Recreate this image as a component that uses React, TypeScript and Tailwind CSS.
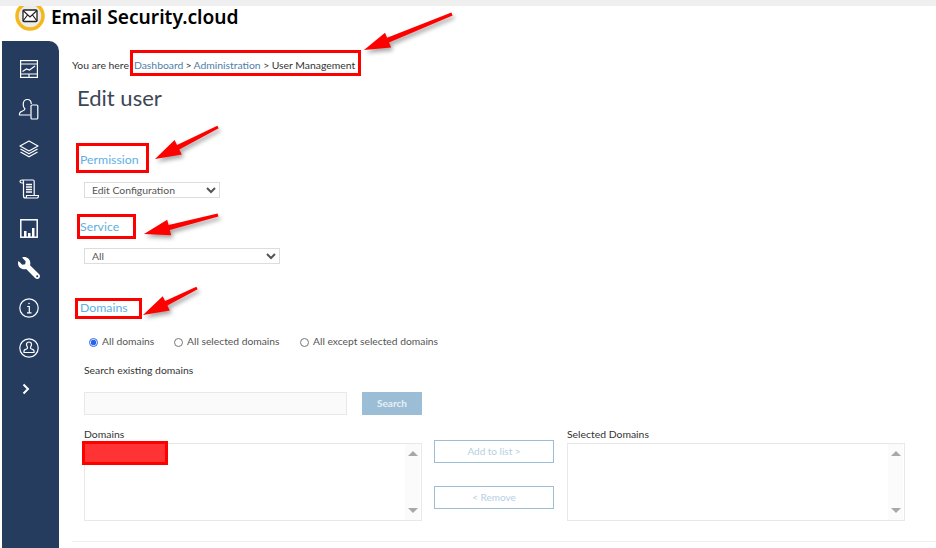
import { FaWrench } from "react-icons/fa";

const font = { fontFamily: 'Lato, "Liberation Sans", sans-serif' };
const titleFont = { fontFamily: '"Noto Sans", "Liberation Sans", sans-serif' };

const ChartIcon = () => (
  <svg width="18" height="18" viewBox="0 0 18 18" fill="none" stroke="white" strokeWidth="1.2">
    <rect x="0.6" y="0.6" width="16.8" height="16.8" />
    <path d="M0.6 4h16.8M0.6 14h16.8M9 14v3.4M2.5 11.5l4-2.5 3 1 5.5-4" />
  </svg>
);

const UsersIcon = () => (
  <svg width="22" height="22" viewBox="0 0 22 22" fill="none" stroke="white" strokeWidth="1.2">
    <path d="M12.500 17H1.500c-.5-2.200.8-3.200 3-4 1.800-.7 2.400-1.200 2.400-2.300C5.700 9.700 5.200 8.200 5.200 6.500 5.200 3.500 7 1.500 9.500 1.500c2.300 0 3.700 1.800 3.800 4.500" />
    <rect x="13" y="7" width="6.800" height="14" rx="1" />
  </svg>
);

const LayersIcon = () => (
  <svg width="20" height="18" viewBox="0 0 20 18" fill="none" stroke="white" strokeWidth="1.2" strokeLinejoin="round">
    <path d="M10 1l9 5-9 5-9-5z" />
    <path d="M1.500 9l8.500 4.800L18.500 9" />
    <path d="M1.500 12l8.500 4.800L18.500 12" />
  </svg>
);

const ScrollIcon = () => (
  <svg width="20" height="20" viewBox="0 0 20 20" fill="none" stroke="white" strokeWidth="1.2">
    <path d="M1 2.500C1 1.500 2 1 3 1h11c.8 0 1.200.6 1.200 1.500V16M1 2.500c0 1 .8 1.500 2 1.500h1.500M3 1c1 0 1.500.7 1.500 1.800v14.200c0 1 .8 2 2 2h11.500c1 0 1.500-1 1.500-2.500h-12c0 1-.3 2.500-1 2.500" />
    <path d="M7 5.500h6M7 8h6M7 10.500h6M7 13h6" strokeWidth="1.400" />
  </svg>
);

const BarsIcon = () => (
  <svg width="18" height="19" viewBox="0 0 18 19" fill="none">
    <rect x="0.800" y="0.800" width="16.400" height="17.400" stroke="white" strokeWidth="1.500" />
    <path d="M4 12h2.500v6H4zM8 14h2.500v4H8zM12 9h2.500v9H12z" fill="white" />
  </svg>
);

const InfoIcon = () => (
  <svg width="20" height="20" viewBox="0 0 20 20" fill="none" stroke="white" strokeWidth="1.200">
    <circle cx="10" cy="10" r="9.200" />
    <path d="M8.200 8.500H10.300V14.500M8 14.800h4.500" />
    <circle cx="10" cy="5.500" r="0.800" fill="white" stroke="none" />
  </svg>
);

const ProfileIcon = () => (
  <svg width="20" height="20" viewBox="0 0 20 20" fill="none" stroke="white" strokeWidth="1.200">
    <circle cx="10" cy="10" r="9.200" />
    <path d="M7.500 6.500C7.500 5 8.700 4 10 4s2.500 1 2.500 2.500c0 1.200-.8 2-1 3-.1.700.3 1.200 1 1.500l1.500.6c.6.300 1 .8 1 1.500v1.400H5v-1.400c0-.7.400-1.200 1-1.500L7.500 11c.7-.3 1.100-.8 1-1.500-.2-1-1-1.800-1-3z" />
  </svg>
);

const Chevron = () => (
  <svg width="8" height="12" viewBox="0 0 8 12" fill="none" stroke="white" strokeWidth="2" className="-ml-[6px] mt-[1px]">
    <path d="M1.500 1.500L6 6l-4.500 4.500" />
  </svg>
);

const LogoMark = () => (
  <svg width="32" height="32" viewBox="0 0 32 32" className="block">
    <circle cx="16" cy="16" r="13" fill="#ececec" stroke="#f5b81c" strokeWidth="3.500" />
    <rect x="9" y="10" width="14" height="11.500" rx="1" fill="white" stroke="#222" strokeWidth="1.300" />
    <path d="M9 10.500L16 17l7-6.500M9 21L13.500 15M23 21L18.500 15" fill="none" stroke="#222" strokeWidth="1.200" />
  </svg>
);

const navIcons = [
  <ChartIcon />,
  <UsersIcon />,
  <LayersIcon />,
  <ScrollIcon />,
  <BarsIcon />,
  <FaWrench size={22} color="white" style={{ transform: "scaleX(-1)" }} />,
  <InfoIcon />,
  <ProfileIcon />,
  <Chevron />,
];

const ListBox = () => (
  <div className="h-[78px] w-[338px] border border-[#e8e8e8] bg-white flex justify-end">
    <div className="w-[15px] mr-px bg-[#fbfbfb] flex flex-col items-center justify-between py-[7px]">
      <div className="w-0 h-0 border-x-[5px] border-x-transparent border-b-[5px] border-b-[#a8a8a8]" />
      <div className="w-0 h-0 border-x-[5px] border-x-transparent border-t-[5px] border-t-[#a8a8a8]" />
    </div>
  </div>
);

const Radio = ({ label, checked, className }: { label: string; checked?: boolean; className: string }) => (
  <label className={`flex items-center gap-[4px] ${className}`}>
    <input type="radio" name="domains" defaultChecked={checked} className="w-[9px] h-[9px] m-0 accent-[#2563eb]" />
    <span>{label}</span>
  </label>
);

const arrows = [
  [452, 14, 364, 50],
  [218, 127, 155, 159],
  [218, 215, 144, 234],
  [197, 288, 143, 315],
];

// red arrow pointing from tail to tip, like the hand annotated screenshot
const arrowPoints = (x1: number, y1: number, x2: number, y2: number) => {
  const len = Math.hypot(x2 - x1, y2 - y1);
  const ux = (x2 - x1) / len;
  const uy = (y2 - y1) / len;
  const nx = -uy;
  const ny = ux;
  const bx = x2 - ux * 26;
  const by = y2 - uy * 26;
  const p = (x: number, y: number) => `${x.toFixed(1)},${y.toFixed(1)}`;
  return [
    p(x1 + nx * 1.5, y1 + ny * 1.5),
    p(bx + nx * 2.5, by + ny * 2.5),
    p(bx + nx * 8, by + ny * 8),
    p(x2, y2),
    p(bx - nx * 8, by - ny * 8),
    p(bx - nx * 2.5, by - ny * 2.5),
    p(x1 - nx * 1.5, y1 - ny * 1.5),
  ].join(" ");
};

const App = () => {
  return (
    <div className="relative h-[548px] w-[936px] overflow-hidden bg-white text-[10.4px] text-[#333]" style={font}>
      <div className="relative z-10 h-[6px] bg-[#efefef]" />
      <div className="h-[35px] pl-[14px] flex items-start">
        <div className="-mt-[6px] shrink-0">
          <LogoMark />
        </div>
        <span className="ml-[5px] text-[19.2px] leading-[22px] font-semibold text-black" style={titleFont}>
          Email Security.cloud
        </span>
      </div>
      <div className="flex h-[507px]">
        <div className="ml-[2px] w-[57px] shrink-0 bg-[#253c5f] rounded-tr-[10px] pt-[8px] pr-[3px] flex flex-col">
          {navIcons.map((icon, i) => (
            <div key={i} className="h-[39.9px] flex items-center justify-center">
              {icon}
            </div>
          ))}
        </div>
        <div className="flex-1 pl-[13px]">
          <div className="h-[48px] flex items-center pt-[1px]">
            <span className="mr-[5px]">You are here</span>
            <a className="text-[#4f7ea8]">Dashboard</a>
            <span className="mx-[2px]">&gt;</span>
            <a className="text-[#4f7ea8]">Administration</a>
            <span className="mx-[2.5px]">&gt;</span>
            <span>User Management</span>
          </div>
          <h1 className="-mt-[5px] pl-[5px] text-[22px] leading-[28px] text-[#3d4654]">Edit user</h1>
          <div className="pl-[8px]">
            <h2 className="mt-[40px] text-[12.3px] leading-[16px] text-[#5eb0e5]">Permission</h2>
            <select className="ml-[4px] mt-[14px] block h-[16px] w-[136px] border border-[#ddd] bg-white text-[10.4px] pl-[3px] text-[#555]">
              <option>Edit Configuration</option>
            </select>
            <h2 className="mt-[21px] text-[12.3px] leading-[16px] text-[#5eb0e5]">Service</h2>
            <select className="ml-[4px] mt-[13px] block h-[16px] w-[196px] border border-[#ddd] bg-white text-[10.4px] pl-[3px] text-[#555]">
              <option>All</option>
            </select>
            <h2 className="mt-[36px] text-[12.3px] leading-[16px] text-[#5eb0e5]">Domains</h2>
            <div className="ml-[9px] mt-[18px] flex h-[16px] items-center text-[10.3px] text-[#555]">
              <Radio label="All domains" checked className="w-[85px]" />
              <Radio label="All selected domains" className="w-[126px]" />
              <Radio label="All except selected domains" className="" />
            </div>
            <div className="ml-[4px] mt-[12px] text-[10.4px] leading-[16px]">Search existing domains</div>
            <div className="ml-[4px] mt-[14px] flex h-[23px] gap-[15px]">
              <div className="w-[263px] border border-[#e8e8e8] bg-[#fafafa]" />
              <button className="w-[60px] bg-[#9bbdd6] text-[10px] font-bold text-[#e8f0f6]">Search</button>
            </div>
            <div className="ml-[4px] mt-[9px] flex">
              <div className="w-[338px]">
                <div className="text-[10.4px] leading-[16px] mb-[1px] mt-[2px]">Domains</div>
                <ListBox />
              </div>
              <div className="ml-[12px] w-[120px] flex flex-col gap-[23px] pt-[16px]">
                <button className="h-[23px] border border-[#9bbdd6] text-[10px] text-[#b5cfe2]">Add to list &gt;</button>
                <button className="h-[23px] border border-[#9bbdd6] text-[10px] text-[#b5cfe2]">&lt; Remove</button>
              </div>
              <div className="ml-[13px] w-[338px]">
                <div className="text-[10.4px] leading-[16px] mb-[1px] mt-[2px]">Selected Domains</div>
                <ListBox />
              </div>
            </div>
          </div>
          <div className="mt-[20px] h-px bg-[#eeeeee]" />
        </div>
      </div>

      {/* annotations on top of the screenshot */}
      <div className="absolute left-[130px] top-[50px] h-[26px] w-[231px] border-[3px] border-[#f00]" />
      <div className="absolute left-[76px] top-[143px] h-[30px] w-[73px] border-[3px] border-[#f00]" />
      <div className="absolute left-[77px] top-[214px] h-[25px] w-[59px] border-[3px] border-[#f00]" />
      <div className="absolute left-[75px] top-[298px] h-[21px] w-[67px] border-[3px] border-[#f00]" />
      <div className="absolute left-[82px] top-[441px] h-[24px] w-[86px] border-[3px] border-[#f00] bg-[#ff3333]" />
      <svg className="absolute left-0 top-0" width="936" height="548" style={{ filter: "drop-shadow(2px 3px 2px rgba(0,0,0,0.35))" }}>
        {arrows.map((a, i) => (
          <polygon key={i} points={arrowPoints(a[0], a[1], a[2], a[3])} fill="#f00" />
        ))}
      </svg>
    </div>
  );
};

export default App;
